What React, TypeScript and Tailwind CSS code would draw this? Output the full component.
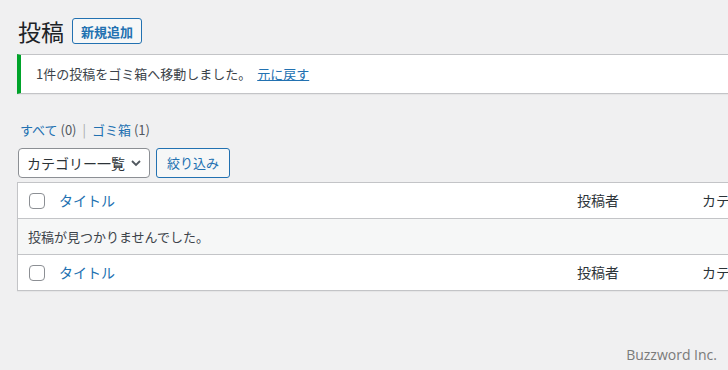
export default function App() {
  const font = { fontFamily: '"Noto Sans CJK JP", "Noto Sans", sans-serif' }
  return (
    <div className="relative w-[728px] h-[370px] overflow-hidden bg-[#f0f0f1] text-[13px] text-[#3c434a]" style={font}>
      <div className="pl-[17px]">
        {/* heading */}
        <div className="flex items-center gap-[8px] pt-[17px] pl-[1px]">
          <h1 className="text-[23px] leading-[28px] text-[#1d2327]">投稿</h1>
          <button className="h-[26px] px-[8px] border border-[#2271b1] rounded-[3px] bg-[#f6f7f7] text-[#2271b1] text-[13px] font-bold leading-none">
            新規追加
          </button>
        </div>

        {/* notice */}
        <div className="mt-[9px] h-[40px] flex items-center bg-white border-l-4 border-[#00a32a] shadow-[0_1px_1px_rgba(0,0,0,0.04)] border-y border-y-[#c3c4c7] pl-[15px]">
          <span>1件の投稿をゴミ箱へ移動しました。</span>
          <a className="ml-[6px] text-[#2271b1] underline">元に戻す</a>
        </div>

        {/* subsubsub */}
        <div className="mt-[26px] pl-[3px] text-[13px] leading-[20px]">
          <a className="text-[#2271b1]">すべて <span className="text-[#50575e]">(0)</span></a>
          <span className="mx-[6px] text-[#a7aaad]">|</span>
          <a className="text-[#2271b1]">ゴミ箱 <span className="text-[#50575e]">(1)</span></a>
        </div>

        {/* filters */}
        <div className="mt-[8px] flex items-center gap-[6px] pl-[1px]">
          <div className="w-[132px] h-[30px] flex items-center justify-between pl-[8px] pr-[7px] bg-white border border-[#8c8f94] rounded-[4px] text-[14px] text-[#2c3338]">
            <span>カテゴリー一覧</span>
            <svg width="12" height="12" viewBox="0 0 12 12" fill="none" stroke="#50575e" strokeWidth="1.8">
              <path d="M2 4l4 4 4-4" />
            </svg>
          </div>
          <button className="h-[30px] px-[10px] border border-[#2271b1] rounded-[3px] bg-[#f6f7f7] text-[#2271b1] text-[13px]">
            絞り込み
          </button>
        </div>

        {/* table */}
        <div className="mt-[4px] bg-white border border-[#c3c4c7] border-r-0 shadow-[0_1px_1px_rgba(0,0,0,0.04)]">
          <div className="h-[36px] flex items-center border-b border-[#c3c4c7]">
            <span className="ml-[11px] w-[16px] h-[16px] rounded-[4px] border border-[#8c8f94] bg-white" />
            <a className="ml-[14px] text-[14px] text-[#2271b1]">タイトル</a>
            <span className="ml-auto w-[125px] text-[14px] text-[#2c3338]">投稿者</span>
            <span className="w-[26px] text-[14px] text-[#2c3338] whitespace-nowrap overflow-hidden">カテ</span>
          </div>
          <div className="h-[36px] flex items-center bg-[#f6f7f7] border-b border-[#c3c4c7] pl-[10px] text-[13px]">
            投稿が見つかりませんでした。
          </div>
          <div className="h-[35px] flex items-center">
            <span className="ml-[11px] w-[16px] h-[16px] rounded-[4px] border border-[#8c8f94] bg-white" />
            <a className="ml-[14px] text-[14px] text-[#2271b1]">タイトル</a>
            <span className="ml-auto w-[125px] text-[14px] text-[#2c3338]">投稿者</span>
            <span className="w-[26px] text-[14px] text-[#2c3338] whitespace-nowrap overflow-hidden">カテ</span>
          </div>
        </div>
      </div>

      <div className="absolute right-[11px] bottom-[5px] text-[14px] text-[#7a7a7a]" style={{ fontFamily: '"Open Sans", "Noto Sans", sans-serif' }}>
        Buzzword Inc.
      </div>
    </div>
  )
}
